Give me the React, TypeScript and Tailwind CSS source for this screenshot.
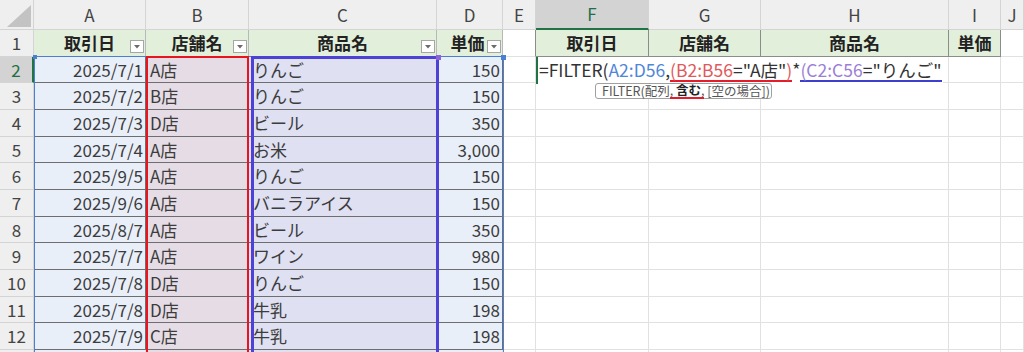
import React from "react";

const data: [string, string, string, string][] = [
  ["2025/7/1", "A店", "りんご", "150"],
  ["2025/7/2", "B店", "りんご", "150"],
  ["2025/7/3", "D店", "ビール", "350"],
  ["2025/7/4", "A店", "お米", "3,000"],
  ["2025/9/5", "A店", "りんご", "150"],
  ["2025/9/6", "A店", "バニラアイス", "150"],
  ["2025/8/7", "A店", "ビール", "350"],
  ["2025/7/7", "A店", "ワイン", "980"],
  ["2025/7/8", "D店", "りんご", "150"],
  ["2025/7/8", "D店", "牛乳", "198"],
  ["2025/7/9", "C店", "牛乳", "198"],
];

const letters = ["A", "B", "C", "D", "E", "F", "G", "H", "I", "J"];

function FilterBtn() {
  return (
    <div className="absolute right-[1px] bottom-[3px] w-[14px] h-[13px] bg-white border border-[#a6a6a6] flex items-end justify-center pb-[3px]">
      <svg width="6" height="4" viewBox="0 0 6 4">
        <polygon points="0,0 6,0 3,3.5" fill="#6b6b6b" />
      </svg>
    </div>
  );
}

const base = "flex items-center overflow-hidden whitespace-nowrap border-r border-b";

export default function App() {
  return (
    <div className="relative w-[1024px] h-[352px] overflow-hidden bg-white font-['Noto_Sans_CJK_JP','Liberation_Sans',sans-serif] text-[17px] text-[#3c3c3c]">
      <div className="grid grid-cols-[34px_112px_103px_188px_66px_33px_113px_112px_188px_52px_1fr] grid-rows-[30px_repeat(13,26.67px)]">
        {/* corner */}
        <div className={base + " bg-[#efefef] border-[#d4d4d4] justify-end items-end pr-[2px] pb-[2px]"}>
          <svg width="24" height="22" viewBox="0 0 24 22">
            <polygon points="24,0 24,22 0,22" fill="#c3c3c3" />
          </svg>
        </div>
        {letters.map((l) =>
          l === "F" ? (
            <div key={l} className={base + " bg-[#d3d3d3] border-r-[#d4d4d4] border-b-2 border-b-[#217346] justify-center text-[#1e6f43]"}>
              {l}
            </div>
          ) : (
            <div key={l} className={base + " bg-[#efefef] border-[#d4d4d4] justify-center text-[#444]"}>
              {l}
            </div>
          )
        )}

        {/* row 1 */}
        <div className={base + " bg-[#efefef] border-[#d4d4d4] justify-center text-[#444]"}>1</div>
        {["取引日", "店舗名", "商品名", "単価"].map((t) => (
          <div key={t} className={base + " relative bg-[#e2efda] border-[#b8b8b8] justify-center font-bold text-[#222]"}>
            <span className={t === "単価" ? "pr-[4px]" : ""}>{t}</span>
            <FilterBtn />
          </div>
        ))}
        <div className={base + " bg-white border-b-[#e1e1e1] border-r-[#8c8c8c]"} />
        {["取引日", "店舗名", "商品名", "単価"].map((t) => (
          <div key={"r" + t} className={base + " bg-[#e2efda] border-[#8c8c8c] justify-center font-bold text-[#222]"}>
            {t}
          </div>
        ))}
        <div className={base + " bg-white border-[#e1e1e1]"} />

        {/* data rows */}
        {data.map((r, i) => (
          <React.Fragment key={i}>
            {i === 0 ? (
              <div className={base + " bg-[#d3d3d3] border-b-[#d4d4d4] border-r-2 border-r-[#217346] justify-center text-[#1e6f43]"}>2</div>
            ) : (
              <div className={base + " bg-[#efefef] border-[#d4d4d4] justify-center text-[#444]"}>{i + 2}</div>
            )}
            <div className={base + " bg-[#e9eff9] border-[#6e6e6e] justify-end pr-[2px]"}>{r[0]}</div>
            <div className={base + " bg-[#e6dce6] border-[#6e6e6e] pl-[4px]"}>{r[1]}</div>
            <div className={base + " bg-[#dfe0f1] border-[#6e6e6e] pl-[4px]"}>{r[2]}</div>
            <div className={base + " bg-[#e9eff9] border-[#6e6e6e] justify-end pr-[2px]"}>{r[3]}</div>
            <div className={base + " bg-white border-[#e1e1e1]"} />
            <div className={base + " bg-white border-[#e1e1e1]"} />
            <div className={base + " bg-white border-[#e1e1e1]"} />
            <div className={base + " bg-white border-[#e1e1e1]"} />
            <div className={base + " bg-white border-[#e1e1e1]"} />
            <div className={base + " bg-white border-[#e1e1e1]"} />
          </React.Fragment>
        ))}
        {/* row 13 sliver */}
        <div className={base + " bg-[#efefef] border-[#d4d4d4]"} />
        <div className={base + " bg-[#e9eff9] border-[#e1e1e1]"} />
        <div className={base + " bg-[#e6dce6] border-[#e1e1e1]"} />
        <div className={base + " bg-[#dfe0f1] border-[#e1e1e1]"} />
        <div className={base + " bg-[#e9eff9] border-[#e1e1e1]"} />
        <div className={base + " bg-white border-[#e1e1e1]"} />
        <div className={base + " bg-white border-[#e1e1e1]"} />
        <div className={base + " bg-white border-[#e1e1e1]"} />
        <div className={base + " bg-white border-[#e1e1e1]"} />
        <div className={base + " bg-white border-[#e1e1e1]"} />
        <div className={base + " bg-white border-[#e1e1e1]"} />
      </div>

      {/* range highlights */}
      <div className="absolute left-[34px] top-[56px] w-[470px] h-[300px] border border-[#4a7fd3]" />
      <div className="absolute left-[146px] top-[56px] w-[103px] h-[300px] border-2 border-[#e8141f]" />
      <div className="absolute left-[251px] top-[56px] w-[188px] h-[300px] border-[3px] border-[#4c43d6]" />
      <div className="absolute left-[436px] top-[55px] w-[5px] h-[5px] bg-[#8d63d8]" />
      <div className="absolute left-[501px] top-[55px] w-[5px] h-[5px] bg-[#4a7fd3]" />
      <div className="absolute left-[33px] top-[55px] w-[4px] h-[4px] bg-[#4a7fd3]" />

      {/* formula being edited in F2 */}
      <div className="absolute left-[536px] top-[57px] w-[407px] h-[27px] bg-white border-l-2 border-[#217346] flex items-center pl-[1px] text-[17.5px] whitespace-nowrap text-[#333]">
        <span>=FILTER(</span>
        <span className="text-[#4f86d9]">A2:D56</span>
        <span>,</span>
        <span className="border-b-2 border-[#e51d2a] leading-[20px]">
          <span className="text-[#e0595b]">(B2:B56</span>
          <span>=&quot;A店&quot;</span>
          <span className="text-[#e0595b]">)</span>
        </span>
        <span>*</span>
        <span className="border-b-2 border-[#3f3fcf] leading-[20px]">
          <span className="text-[#9b7fd6]">(C2:C56</span>
          <span>=&quot;りんご&quot;</span>
        </span>
      </div>

      {/* tooltip */}
      <div className="absolute left-[595px] top-[83px] w-[177px] h-[16px] bg-white border border-[#a0a0a0] rounded-[3px] flex items-center pl-[6px] text-[12.5px] leading-[14px] text-[#555] whitespace-nowrap">
        <span>FILTER(配列</span>
        <span className="border-b-2 border-[#e51d2a]">
          , <span className="font-bold text-[#222]">含む</span>,
        </span>
        <span>&nbsp;[空の場合])</span>
      </div>
    </div>
  );
}
